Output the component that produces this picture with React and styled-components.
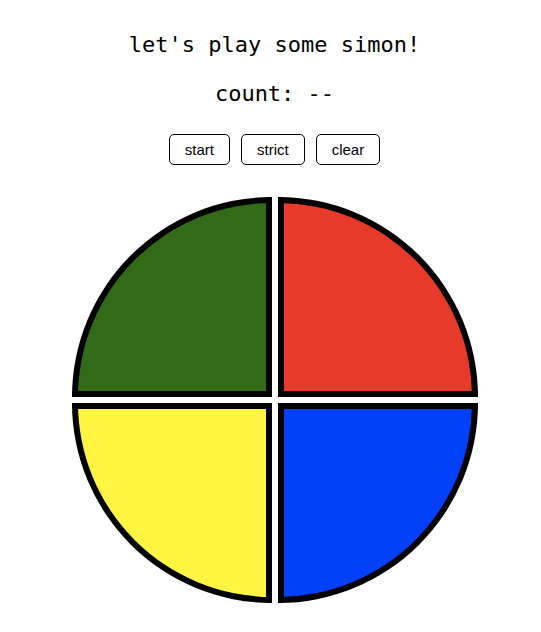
import React from 'react'
import styled, { createGlobalStyle } from 'styled-components'

const GlobalStyle = createGlobalStyle`
  body {
    margin: 0;
    background: #fff;
  }
`

function App() {
    return (
        <Page>
            <GlobalStyle />
            <Title>let's play some simon!</Title>
            <Count>count: --</Count>
            <Controls>
                <Btn>start</Btn>
                <Btn>strict</Btn>
                <Btn>clear</Btn>
            </Controls>
            <Board>
                <Pad color="#326a18" corner="top-left" />
                <Pad color="#e83a2a" corner="top-right" />
                <Pad color="#fff542" corner="bottom-left" />
                <Pad color="#0340fb" corner="bottom-right" />
            </Board>
        </Page>
    )
}

export default App

const Page = styled.div`
  display: flex;
  flex-direction: column;
  align-items: center;
  padding: 29px 0 0 8px;
`

const Title = styled.h1`
  margin: 0;
  font-family: "DejaVu Sans Mono", "Liberation Mono", monospace;
  font-weight: normal;
  font-size: 22px;
  line-height: 32px;
  color: #000;
`

const Count = styled.h2`
  margin: 17px 0 0;
  font-family: "DejaVu Sans Mono", "Liberation Mono", monospace;
  font-weight: normal;
  font-size: 22px;
  line-height: 32px;
  color: #000;
`

const Controls = styled.div`
  display: flex;
  gap: 11px;
  margin-top: 24px;
`

const Btn = styled.button`
  height: 31px;
  padding: 0 15px;
  border: 1px solid #000;
  border-radius: 5px;
  background: #fff;
  color: #000;
  font-family: "Liberation Sans", Arial, sans-serif;
  font-size: 15px;
  cursor: pointer;
`

const radius = {
    'top-left': 'border-top-left-radius',
    'top-right': 'border-top-right-radius',
    'bottom-left': 'border-bottom-left-radius',
    'bottom-right': 'border-bottom-right-radius',
}

const Board = styled.div`
  display: grid;
  grid-template-columns: 200px 200px;
  grid-template-rows: 200px 200px;
  gap: 6px;
  margin-top: 32px;
`

const Pad = styled.div`
  box-sizing: border-box;
  border: 6px solid #000;
  background: ${p => p.color};
  ${p => radius[p.corner]}: 200px;
  cursor: pointer;
`
